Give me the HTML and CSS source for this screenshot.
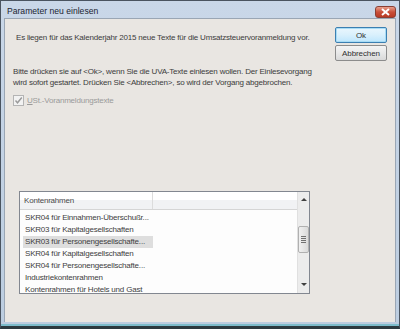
FILE: index.html
```html
<!DOCTYPE html>
<html lang="de">
<head>
    <meta charset="UTF-8">
    <title>Parameter neu einlesen</title>
    <link rel="stylesheet" href="styles.css">
</head>
<body>

<div class="window">
    <div class="titlebar">
        <span class="title">Parameter neu einlesen</span>
        <button class="close" type="button">
            <svg width="9" height="8" viewBox="0 0 9 8"><path d="M1 1 L8 7 M8 1 L1 7" stroke="#fff" stroke-width="2"/></svg>
        </button>
    </div>

    <div class="client">
        <div class="top">
            <p class="intro">Es liegen für das Kalenderjahr 2015 neue Texte für die Umsatzsteuervoranmeldung vor.</p>
            <div class="buttons">
                <button class="btn default" type="button">Ok</button>
                <button class="btn" type="button">Abbrechen</button>
            </div>
        </div>

        <p class="info">Bitte drücken sie auf &lt;Ok&gt;, wenn Sie die UVA-Texte einlesen wollen. Der Einlesevorgang<br>wird sofort gestartet. Drücken Sie &lt;Abbrechen&gt;, so wird der Vorgang abgebrochen.</p>

        <label class="check">
            <span class="box">
                <svg width="9" height="9" viewBox="0 0 9 9"><path d="M1.5 4.5 L3.5 6.8 L7.8 1.5" fill="none" stroke="#9a9a9a" stroke-width="1.4"/></svg>
            </span>
            <span><u>U</u>St.-Voranmeldungstexte</span>
        </label>

        <div class="listview">
            <div class="list-main">
                <div class="list-header">
                    <div class="col">Kontenrahmen</div>
                    <div class="col rest"></div>
                </div>
                <div class="rows">
                    <div class="row">SKR04 für Einnahmen-Überschußr...</div>
                    <div class="row">SKR03 für Kapitalgesellschaften</div>
                    <div class="row selected">SKR03 für Personengesellschafte...</div>
                    <div class="row">SKR04 für Kapitalgesellschaften</div>
                    <div class="row">SKR04 für Personengesellschafte...</div>
                    <div class="row">Industriekontenrahmen</div>
                    <div class="row">Kontenrahmen für Hotels und Gast</div>
                </div>
            </div>
            <div class="scrollbar">
                <div class="arrow up"></div>
                <div class="track">
                    <div class="thumb"><span class="grip"></span></div>
                </div>
                <div class="arrow down"></div>
            </div>
        </div>
    </div>
</div>

</body>
</html>
```

FILE: styles.css
```css
body {
    margin: 0;
    font-family: "Liberation Sans", Arial, sans-serif;
    background-color: #3a4450;
}
.window {
    width: 400px;
    height: 329px;
    box-sizing: border-box;
    border: 1px solid #4a5460;
    border-bottom: 3px solid #2c3a40;
    background: linear-gradient(#c9d7e8, #bccde0);
    padding: 0 3px 0 3px;
    display: flex;
    flex-direction: column;
    position: relative;
}
.window::after {
    content: "";
    position: absolute;
    left: 0;
    right: 0;
    bottom: 0;
    height: 2px;
    background: #7cbccb;
}
.titlebar {
    height: 17px;
    display: flex;
    align-items: center;
    justify-content: space-between;
}
.title {
    font-size: 8.6px;
    color: #1c2430;
    padding-left: 3px;
    padding-top: 2px;
}
.close {
    width: 21px;
    height: 12px;
    margin-top: 4px;
    padding: 0;
    border: 1px solid #8a4034;
    border-radius: 3px;
    background: linear-gradient(#e9a08c, #c9503a 50%, #b93a24);
    display: flex;
    align-items: center;
    justify-content: center;
}
.client {
    flex: 1;
    background-color: #e9e6e2;
    border: 1px solid #9aa6b4;
    border-bottom: none;
    margin-bottom: 4px;
    color: #3c3c3c;
    font-size: 8px;
    letter-spacing: -0.2px;
    display: flex;
    flex-direction: column;
}
.top {
    display: flex;
    justify-content: space-between;
    padding: 8px 8px 0 11px;
}
.intro {
    margin: 6px 0 0;
    white-space: nowrap;
}
.buttons {
    display: flex;
    flex-direction: column;
    gap: 2px;
}
.btn {
    width: 52px;
    height: 16px;
    padding: 0;
    font-family: "Liberation Sans", Arial, sans-serif;
    font-size: 8px;
    letter-spacing: -0.1px;
    color: #303030;
    border: 1px solid #8c8c8c;
    border-radius: 2px;
    background: linear-gradient(#f4f4f4, #e8e8e8 50%, #d9d9d9);
}
.btn.default {
    border-color: #3c7fb1;
    background: linear-gradient(#eaf6fd, #d9f0fc 50%, #bee6fd);
    box-shadow: inset 0 0 0 1px #a8dcf5;
}
.info {
    margin: 5px 0 0 8px;
    line-height: 11px;
}
.check {
    display: flex;
    align-items: center;
    gap: 3px;
    margin: 7px 0 0 8px;
    color: #9a9a9a;
}
.box {
    width: 9px;
    height: 9px;
    border: 1px solid #b4b4b4;
    background: #f2f2f2;
    display: flex;
}
.listview {
    margin: auto 0 28px 14px;
    width: 291px;
    height: 103px;
    box-sizing: border-box;
    border: 1px solid #828790;
    background: #fdfdfd;
    display: flex;
    overflow: hidden;
}
.list-main {
    flex: 1;
    overflow: hidden;
}
.list-header {
    display: flex;
    height: 17px;
    background: linear-gradient(#ffffff, #ffffff 45%, #f1f2f4 46%, #f1f2f4);
    border-bottom: 1px solid #d5d5d5;
}
.col {
    width: 128px;
    padding-left: 4px;
    line-height: 17px;
    color: #4a4a4a;
    border-right: 1px solid #dcdcdc;
}
.col.rest {
    flex: 1;
    border-right: none;
}
.rows {
    padding: 2px 0 0 3px;
}
.row {
    width: 128px;
    height: 12px;
    line-height: 12px;
    padding-left: 2px;
    white-space: nowrap;
    color: #404040;
}
.row.selected {
    background: #dedede;
}
.scrollbar {
    width: 11px;
    background: #ececec;
    border-left: 1px solid #e0e0e0;
    display: flex;
    flex-direction: column;
}
.arrow {
    height: 16px;
    position: relative;
}
.arrow::after {
    content: "";
    position: absolute;
    left: 3px;
    top: 6px;
    border-left: 3px solid transparent;
    border-right: 3px solid transparent;
}
.arrow.up::after {
    border-bottom: 3px solid #404040;
}
.arrow.down::after {
    border-top: 3px solid #404040;
}
.track {
    flex: 1;
    padding-top: 18px;
}
.thumb {
    height: 25px;
    border: 1px solid #b0b0b0;
    border-radius: 2px;
    background: linear-gradient(90deg, #f0f0f0, #dadada);
    display: flex;
    align-items: center;
    justify-content: center;
}
.grip {
    width: 5px;
    height: 7px;
    background: repeating-linear-gradient(#707070 0 1px, transparent 1px 2px);
}
```
